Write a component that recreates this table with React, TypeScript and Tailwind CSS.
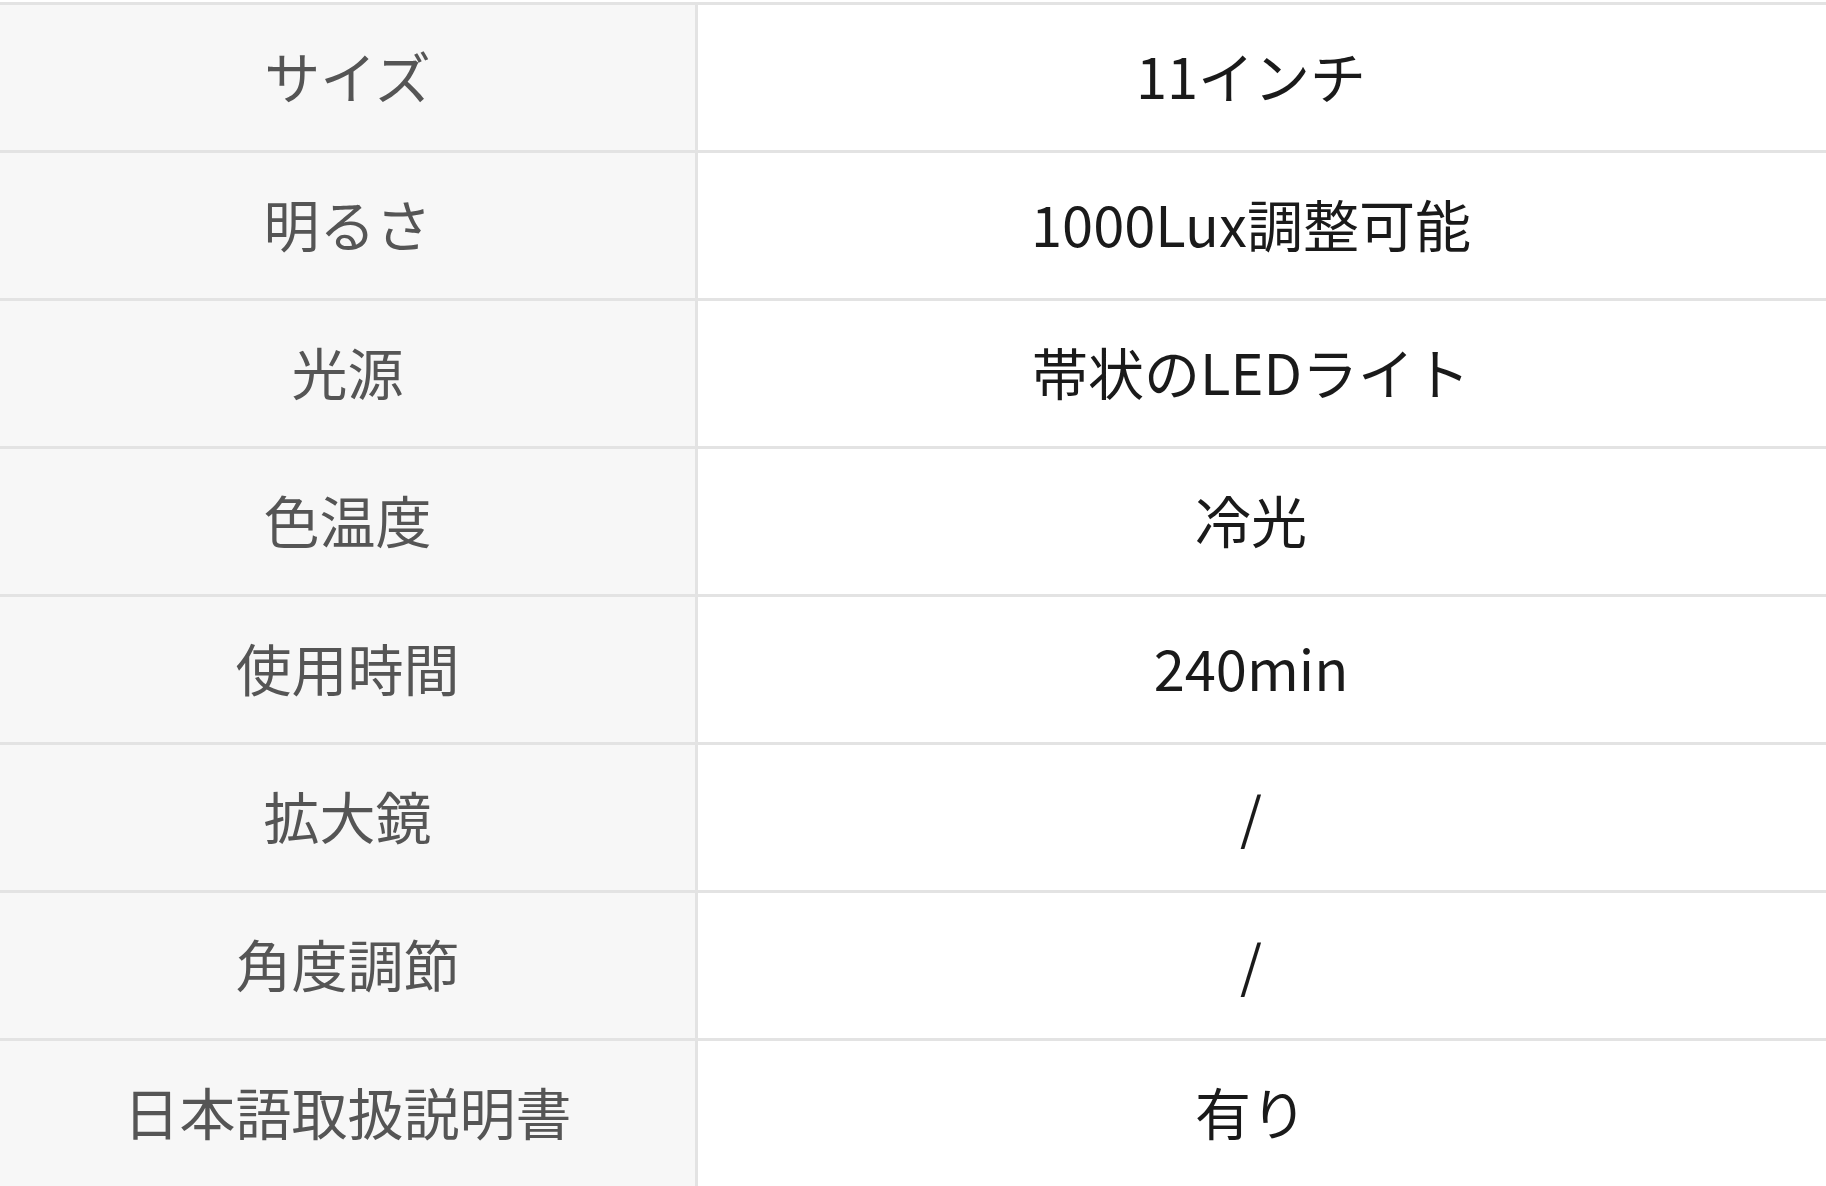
const specs = [
  { label: 'サイズ', value: '11インチ' },
  { label: '明るさ', value: '1000Lux調整可能' },
  { label: '光源', value: '帯状のLEDライト' },
  { label: '色温度', value: '冷光' },
  { label: '使用時間', value: '240min' },
  { label: '拡大鏡', value: '/' },
  { label: '角度調節', value: '/' },
  { label: '日本語取扱説明書', value: '有り' },
];

export default function App() {
  return (
    <div
      className="min-h-screen w-full bg-white pt-[2px]"
      style={{ fontFamily: '"Noto Sans CJK JP", "Noto Sans", sans-serif' }}
    >
      <div className="border-t-[3px] border-[#e3e3e3]">
        {specs.map((row) => (
          <div key={row.label} className="flex h-[148px] border-b-[3px] border-[#e3e3e3]">
            <div className="flex w-[698px] shrink-0 items-center justify-center border-r-[3px] border-[#e3e3e3] bg-[#f7f7f7] pb-[6px] text-[56px] text-[#555555]">
              {row.label}
            </div>
            <div className="flex flex-1 items-center justify-center pr-[22px] pb-[6px] text-[56px] text-[#1a1a1a]">
              {row.value}
            </div>
          </div>
        ))}
      </div>
    </div>
  );
}
